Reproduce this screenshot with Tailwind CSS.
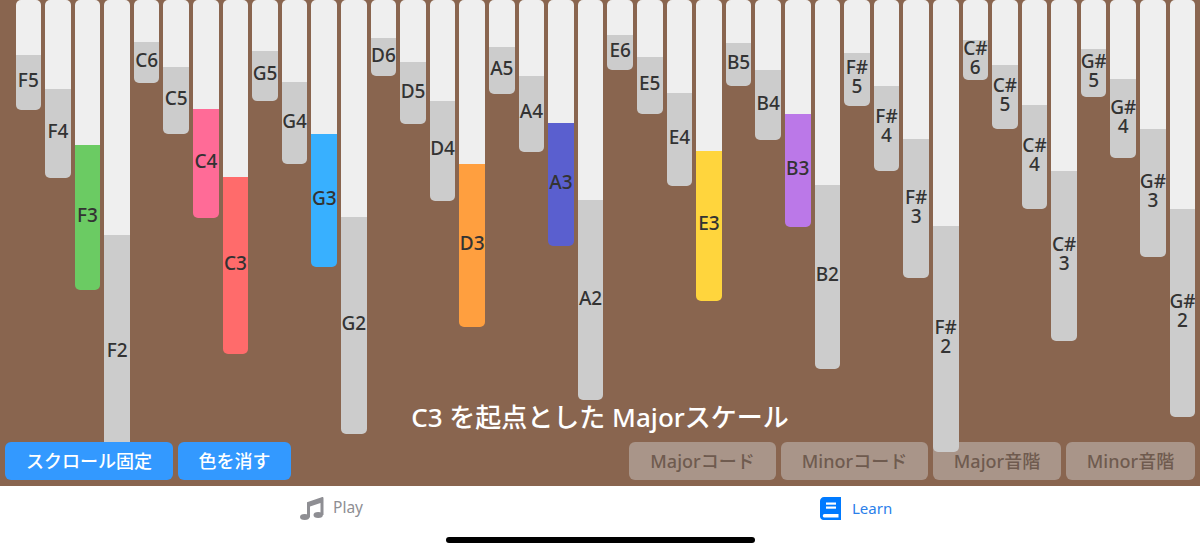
<!DOCTYPE html>
<html lang="ja">
<head>
  <meta charset="UTF-8" />
  <meta name="viewport" content="width=device-width, initial-scale=1.0"/>
  <title>Kalimba</title>
  <script src="https://cdn.jsdelivr.net/npm/@tailwindcss/browser@4"></script>
</head>
<body class="bg-white overflow-hidden font-['Noto_Sans','Noto_Sans_CJK_JP',sans-serif]">
  <div class="w-[1200px] h-[554px] flex flex-col">

    <!-- Kalimba body -->
    <main class="h-[486px] bg-[#89654f] flex flex-col">
      <!-- Tines are filled in by the script below; they hang over the caption and buttons -->
      <div id="tines" class="relative z-10 h-0 flex items-start gap-[4px] pl-[15.5px]"></div>

      <p class="mt-auto text-center text-white text-[26px] leading-[30px] font-medium">C3 を起点とした Majorスケール</p>

      <div class="mt-[10px] mb-[6px] px-[5px] flex gap-[5px] text-[18px] leading-[36px] font-medium text-center">
        <button class="relative z-20 w-[168px] h-[38px] rounded-[6px] bg-[#3399ff] text-white">スクロール固定</button>
        <button class="relative z-20 w-[113px] h-[38px] rounded-[6px] bg-[#3399ff] text-white">色を消す</button>
        <button class="ml-auto w-[147px] h-[38px] rounded-[6px] bg-[#a99589] text-[#6f5b4f]">Majorコード</button>
        <button class="w-[147px] h-[38px] rounded-[6px] bg-[#a99589] text-[#6f5b4f]">Minorコード</button>
        <button class="w-[128px] h-[38px] rounded-[6px] bg-[#a99589] text-[#6f5b4f]">Major音階</button>
        <button class="w-[129px] h-[38px] rounded-[6px] bg-[#a99589] text-[#6f5b4f]">Minor音階</button>
      </div>
    </main>

    <!-- Tab bar -->
    <nav class="flex-1 relative">
      <div class="flex h-[44px] items-center">
        <div class="w-[600px] flex items-center gap-[9px] pl-[300px] text-[15.5px] text-[#8e8e93]">
          <svg class="w-[24px] h-[23px]" viewBox="0 0 24 23" fill="#8e8e93">
            <path d="M7 5.200 21.600.2C22.800-.2 23.500.4 23.500 1.400V18H20.500V6L10 9.500V20.500H7Z"/>
            <ellipse cx="4.700" cy="20" rx="4.700" ry="3"/>
            <ellipse cx="18.200" cy="18" rx="4.700" ry="3"/>
          </svg>
          <span>Play</span>
        </div>
        <div class="w-[600px] flex items-center gap-[11px] pl-[220px] text-[15px] text-[#2a80ea]">
          <svg class="w-[21px] h-[23px]" viewBox="0 0 21 23">
            <path fill="#007aff" d="M4 0H21V23H3.500C1.600 23 0 21.400 0 19.500V4C0 1.800 1.800 0 4 0Z"/>
            <path fill="#fff" d="M4.500 17H18.500V20.500H4.500C3.500 20.500 2.800 19.700 2.800 18.700 2.800 17.800 3.500 17 4.500 17Z"/>
            <rect x="6" y="5.500" width="10" height="2.200" fill="#fff"/>
            <rect x="6" y="9.500" width="10" height="2.200" fill="#fff"/>
          </svg>
          <span>Learn</span>
        </div>
      </div>
      <!-- Home indicator -->
      <div class="absolute left-[446px] top-[51px] w-[309px] h-[6px] rounded-full bg-black"></div>
    </nav>
  </div>

  <script>
    // [note, height, highlight class]
    const notas = [
      ['F5', 110], ['F4', 178], ['F3', 290, 'bg-[#6bcb63]'], ['F2', 470],
      ['C6', 83], ['C5', 134], ['C4', 218, 'bg-[#ff6b97]'], ['C3', 354, 'bg-[#ff6b6b]'],
      ['G5', 101], ['G4', 164], ['G3', 267, 'bg-[#38b0ff]'], ['G2', 434],
      ['D6', 76], ['D5', 124], ['D4', 201], ['D3', 327, 'bg-[#ff9f3f]'],
      ['A5', 93.5], ['A4', 151.5], ['A3', 246, 'bg-[#5a5fcf]'], ['A2', 400],
      ['E6', 70], ['E5', 114], ['E4', 185.5], ['E3', 301, 'bg-[#ffd53d]'],
      ['B5', 86], ['B4', 140], ['B3', 227, 'bg-[#bb78e8]'], ['B2', 369],
      ['F#\n5', 105.5], ['F#\n4', 171], ['F#\n3', 278], ['F#\n2', 452],
      ['C#\n6', 79.5], ['C#\n5', 129], ['C#\n4', 209], ['C#\n3', 341],
      ['G#\n5', 97], ['G#\n4', 158], ['G#\n3', 257], ['G#\n2', 417]
    ];

    const tines = document.getElementById('tines');
    notas.forEach(([nome, altura, cor]) => {
      const tine = document.createElement('div');
      tine.className = 'w-[25.6px] shrink-0 flex flex-col rounded-[5px] overflow-hidden';
      tine.style.height = altura + 'px';

      const topo = document.createElement('div');
      topo.className = 'flex-1 min-h-0 bg-[#efefef]';

      const base = document.createElement('div');
      base.className = 'flex-1 min-h-0 flex items-center justify-center text-center whitespace-pre text-[19px] leading-[19px] font-medium text-[#333333] ' + (cor || 'bg-[#cccccc]');

      const rotulo = document.createElement('span');
      rotulo.className = '-translate-y-[2px]';
      rotulo.textContent = nome;

      base.append(rotulo);
      tine.append(topo, base);
      tines.append(tine);
    });
  </script>
</body>
</html>
